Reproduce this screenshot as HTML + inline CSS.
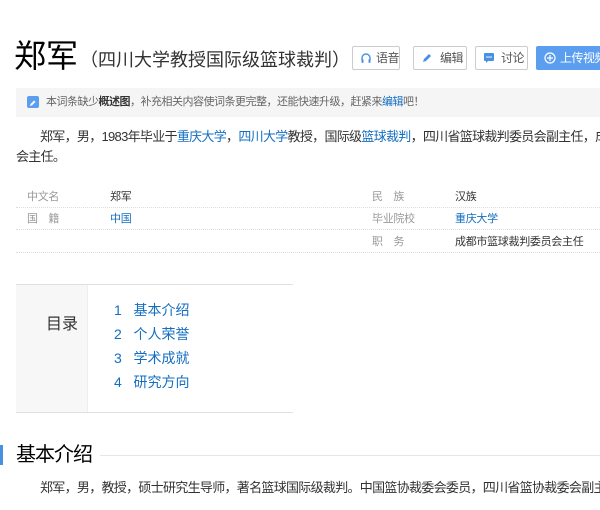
<!DOCTYPE html>
<html><head><meta charset="utf-8"><style>
*{margin:0;padding:0;box-sizing:border-box}
body{width:600px;height:510px;overflow:hidden;background:#fff;font-family:"Liberation Sans","Noto Sans CJK SC",sans-serif;color:#333;position:relative}
.a{position:absolute;white-space:nowrap}
a,.l{color:#136ec2;text-decoration:none}
.btn{position:absolute;top:46px;height:24px;border:1px solid #ccc;border-radius:2px;font-size:12px;color:#555;line-height:22px;padding-left:23px;background:#fff;white-space:nowrap;overflow:hidden;letter-spacing:-0.5px}
.btn svg{position:absolute;left:7px;top:5px}
.row{position:absolute;left:16px;width:584px;height:22px;border-bottom:1px dotted #ddd;font-size:11px;line-height:22px;letter-spacing:-0.3px}
.row span{position:absolute}
.g{color:#999}
.toc{font-size:14px;line-height:24px;color:#136ec2}
.p{font-size:13px;line-height:20px;letter-spacing:-0.7px}
</style></head><body>
<div class="a" style="left:14px;top:36px;font-size:32px;color:#000;line-height:40px">郑军</div>
<div class="a" style="left:80px;top:47px;font-size:18px;color:#333;line-height:26px">（四川大学教授国际级篮球裁判）</div>
<div class="btn" style="left:352px;width:48px"><svg width="12" height="12" viewBox="0 0 12 12"><path d="M2 8V6a4 4 0 0 1 8 0v2" fill="none" stroke="#4a90e2" stroke-width="1.4"/><rect x="1.5" y="7" width="2" height="4" rx="1" fill="#4a90e2"/><rect x="8.5" y="7" width="2" height="4" rx="1" fill="#4a90e2"/></svg>语音</div>
<div class="btn" style="left:413px;width:54px;padding-left:26px"><svg width="12" height="12" viewBox="0 0 12 12"><path d="M2 10l1-3 5-5 2 2-5 5z" fill="#4a90e2"/></svg>编辑</div>
<div class="btn" style="left:475px;width:53px;padding-left:25px"><svg width="12" height="12" viewBox="0 0 12 12"><rect x="1" y="1" width="10" height="8" rx="1" fill="#4a90e2"/><path d="M3 9l0 2 2-2z" fill="#4a90e2"/><circle cx="4" cy="5" r=".8" fill="#fff"/><circle cx="6" cy="5" r=".8" fill="#fff"/><circle cx="8" cy="5" r=".8" fill="#fff"/></svg>讨论</div>
<div class="btn" style="left:536px;width:70px;background:#5b9ef0;border-color:#5b9ef0;color:#fff"><svg width="12" height="12" viewBox="0 0 12 12"><circle cx="6" cy="6" r="5" fill="none" stroke="#fff" stroke-width="1.2"/><path d="M6 3v6M3 6h6" stroke="#fff" stroke-width="1.2"/></svg>上传视频</div>
<div class="a" style="left:16px;top:88px;width:584px;height:29px;background:#f5f5f5"></div>
<div class="a" style="left:27px;top:96px;width:12px;height:12px;background:#5b9ef0;border-radius:2px"><svg width="12" height="12"><path d="M3 9l.6-2 3.5-3.5 1.4 1.4L5 8.4z" fill="#fff"/></svg></div>
<div class="a" style="left:46px;top:94px;font-size:11px;line-height:16px;color:#666;letter-spacing:-0.5px">本词条缺少<b style="color:#333">概述图</b>，补充相关内容使词条更完整，还能快速升级，赶紧来<a>编辑</a>吧！</div>
<div class="a p" style="left:40px;top:127px">郑军，男，1983年毕业于<a>重庆大学</a>，<a>四川大学</a>教授，国际级<a>篮球裁判</a>，四川省篮球裁判委员会副主任，成</div>
<div class="a p" style="left:16px;top:147px">会主任。</div>
<div class="row" style="top:186px"><span class="g" style="left:11px">中文名</span><span style="left:94px">郑军</span><span class="g" style="left:356px">民　族</span><span style="left:439px">汉族</span></div>
<div class="row" style="top:208px"><span class="g" style="left:11px">国　籍</span><span class="l" style="left:94px">中国</span><span class="g" style="left:356px">毕业院校</span><span class="l" style="left:439px">重庆大学</span></div>
<div class="row" style="top:231px"><span class="g" style="left:356px">职　务</span><span style="left:439px">成都市篮球裁判委员会主任</span></div>
<div class="a" style="left:16px;top:284px;width:277px;height:129px;border-top:1px solid #e0e0e0;border-bottom:1px solid #e0e0e0"></div>
<div class="a" style="left:16px;top:285px;width:72px;height:127px;background:#f7f7f7;border-right:1px solid #eee"></div>
<div class="a" style="left:46px;top:314px;font-size:16px;line-height:22px">目录</div>
<div class="a toc" style="left:114px;top:298px">1&nbsp;&nbsp; 基本介绍<br>2&nbsp;&nbsp; 个人荣誉<br>3&nbsp;&nbsp; 学术成就<br>4&nbsp;&nbsp; 研究方向</div>
<div class="a" style="left:0;top:445px;width:3px;height:20px;background:#4a90e2"></div>
<div class="a" style="left:16px;top:441px;font-size:20px;line-height:28px;color:#000;letter-spacing:-1px">基本介绍</div>
<div class="a" style="left:100px;top:455px;width:500px;height:1px;background:#e6e6e6"></div>
<div class="a p" style="left:40px;top:478px">郑军，男，教授，硕士研究生导师，著名篮球国际级裁判。中国篮协裁委会委员，四川省篮协裁委会副主</div>
</body></html>
